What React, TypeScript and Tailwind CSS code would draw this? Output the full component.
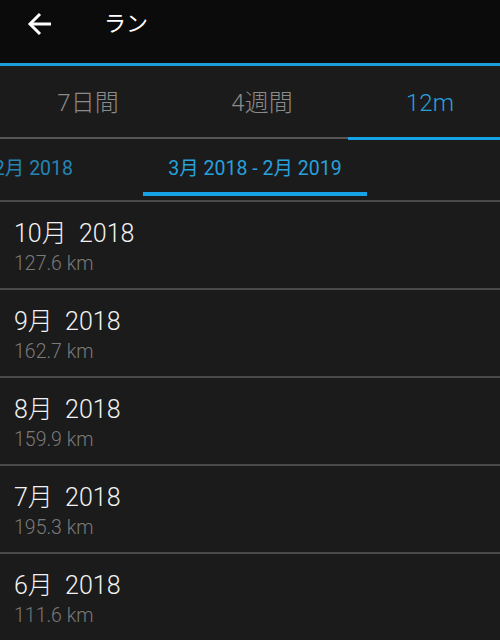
const months = [
  { label: "10月", year: "2018", km: "127.6 km" },
  { label: "9月", year: "2018", km: "162.7 km" },
  { label: "8月", year: "2018", km: "159.9 km" },
  { label: "7月", year: "2018", km: "195.3 km" },
  { label: "6月", year: "2018", km: "111.6 km" },
];

const font = "font-['Roboto','Noto_Sans_CJK_JP',sans-serif]";

export default function App() {
  return (
    <div className={`w-[500px] h-[640px] overflow-hidden bg-[#1b1b1b] ${font}`}>
      {/* top bar */}
      <div className="h-[63px] bg-[#0b0b0b] flex items-center pb-[15px]">
        <svg
          className="ml-[27px] w-[25px] h-[24px]"
          viewBox="0 0 25 24"
          fill="none"
          stroke="white"
          strokeWidth={3}
          strokeLinejoin="miter"
        >
          <path d="M24 12H4" />
          <path d="M13 2L3 12L13 22" />
        </svg>
        <span className="ml-[52px] text-[22px] text-white leading-none">ラン</span>
      </div>
      <div className="h-[3px] bg-[#1a9fdc]" />

      {/* period tabs */}
      <div className="relative h-[74px] flex overflow-hidden">
        <div className="w-[176px] shrink-0 flex items-center justify-center text-[24px] font-light text-[#8a8a8a]">7日間</div>
        <div className="w-[172px] shrink-0 flex items-center justify-center text-[24px] font-light text-[#8a8a8a]">4週間</div>
        <div className="w-[164px] shrink-0 flex items-center justify-center text-[24px] font-light text-[#27a0dc]">12m</div>
        <div className="absolute left-0 right-0 bottom-[1px] h-[2px] bg-[#555555]" />
        <div className="absolute left-[348px] right-0 bottom-0 h-[3px] bg-[#16a3e6]" />
      </div>

      {/* range tabs */}
      <div className="relative h-[62px] flex overflow-hidden border-b-2 border-[#4a4a4a]">
        <div className="w-[143px] shrink-0 flex items-center justify-end pr-[70px] pb-[2px] text-[19.5px] text-[#2585b5] whitespace-nowrap">
          2月 2018
        </div>
        <div className="relative w-[224px] shrink-0 flex items-center justify-center pb-[2px] text-[19.5px] text-[#27a0dc] whitespace-nowrap">
          3月 2018 - 2月 2019
          <div className="absolute left-0 right-0 bottom-[4px] h-[4px] bg-[#16a3e6]" />
        </div>
      </div>

      {/* month list */}
      {months.map((m) => (
        <div key={m.label} className="h-[88px] border-b-2 border-[#4a4a4a] pl-[14px] pt-[16px]">
          <div className="text-[25px] leading-[32px] font-light text-[#f2f2f2] whitespace-pre">
            {m.label}  {m.year}
          </div>
          <div className="mt-[1px] text-[19.5px] leading-[26px] font-light text-[#7a7a7a]">{m.km}</div>
        </div>
      ))}
    </div>
  );
}
